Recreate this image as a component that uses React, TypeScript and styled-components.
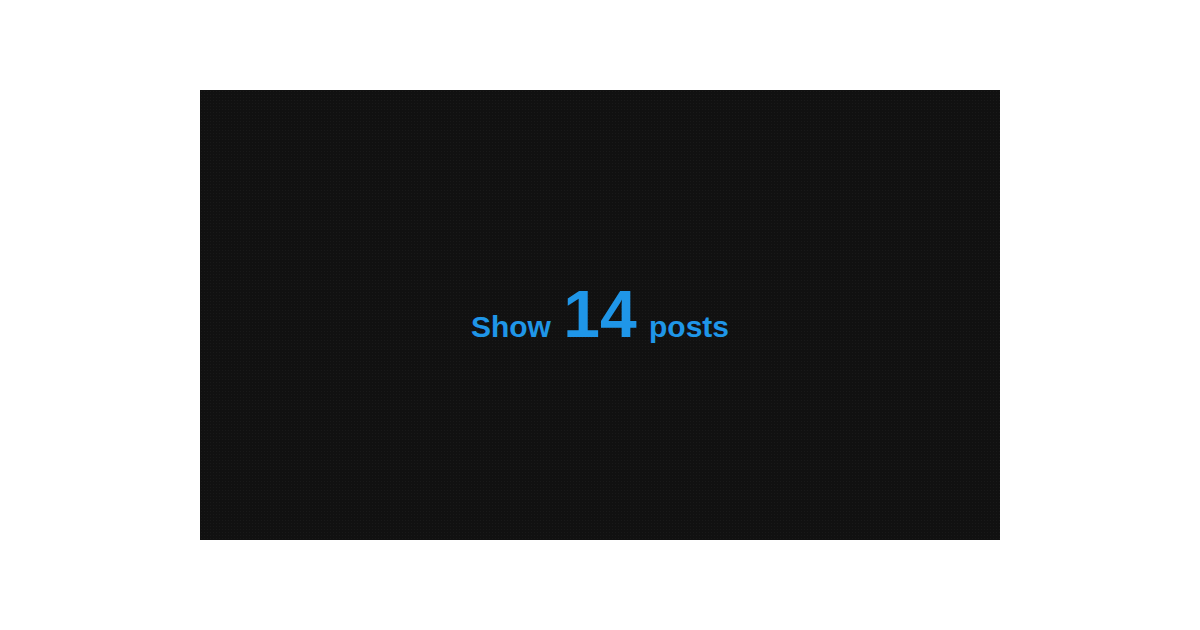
import * as React from 'react';
import styled, { createGlobalStyle } from 'styled-components';

const GlobalStyle = createGlobalStyle`
html, body {
  margin: 0;
  padding: 0;
  background: #ffffff;
}
`;

const Page = styled.div`
width: 1200px;
height: 630px;
display: flex;
align-items: center;
justify-content: center;
`;

const Screen = styled.div`
width: 800px;
height: 450px;
background-color: #111111;
background-image: radial-gradient(rgba(255, 255, 255, 0.035) 1px, transparent 1px);
background-size: 3px 3px;
display: flex;
align-items: center;
justify-content: center;
`;

const Caption = styled.div`
font-family: "Liberation Sans", Arial, sans-serif;
font-weight: bold;
color: #1f96e8;
font-size: 30px;
line-height: 1;
white-space: pre;
display: flex;
align-items: baseline;
margin-top: -2px;
`;

const Count = styled.span`
font-size: 66px;
margin: 0 4px;
`;

export default function App() {
  return (
    <Page>
      <GlobalStyle />
      <Screen>
        <Caption>
          Show <Count>14</Count> posts
        </Caption>
      </Screen>
    </Page>
  );
}
